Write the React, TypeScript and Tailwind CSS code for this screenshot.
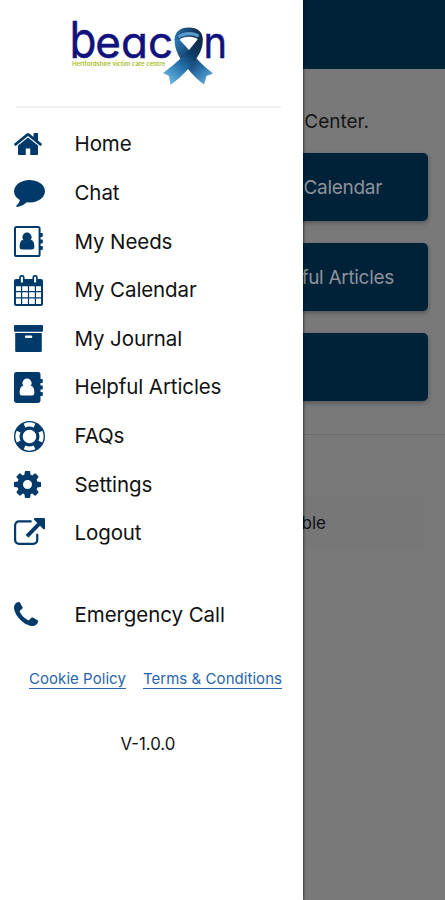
import type { ReactNode } from "react";

const NAVY = "#003a6b";

function Glyph({ box, w, h, d }: { box: string; w: number; h: number; d: string }) {
  return (
    <svg width={w} height={h} viewBox={box} preserveAspectRatio="none" fill={NAVY}>
      <path d={d} />
    </svg>
  );
}

const Home = () => (
  <Glyph box="89 253 1614 1343" w={28} h={23} d="M1472 992v480q0 26-19 45t-45 19h-384v-384h-256v384h-384q-26 0-45-19t-19-45v-480q0-1 .5-3t.5-3l575-474 575 474q1 2 1 6zm223-69l-62 74q-8 9-21 11h-3q-13 0-21-7l-692-577-692 577q-12 8-24 7-13-2-21-11l-62-74q-8-10-7-23.5t11-21.5l719-599q32-26 76-26t76 26l244 204v-195q0-14 9-23t23-9h192q14 0 23 9t9 23v408l219 182q10 8 11 21.5t-7 23.5z" />
);

const Comment = () => (
  <Glyph box="0 256 1792 1537" w={31} h={27} d="M1792 896q0 174-120 321.5t-326 233-450 85.5q-70 0-145-8-198 175-460 242-49 14-114 22-17 2-30.5-9t-17.5-29v-1q-3-4-.5-12t2-10 4.5-9.5l6-9 7-8.5 8-9q7-8 31-34.5t34.5-38 31-39.5 32.5-51 27-59 26-76q-157-89-247.5-220t-90.5-281q0-130 71-248.5t191-204.5 286-136.5 348-50.5q244 0 450 85.5t326 233 120 321.5z" />
);

const Person = ({ fill }: { fill: string }) => (
  <g fill={fill}>
    <ellipse cx="13" cy="11.2" rx="4.6" ry="4.7" />
    <path d="M9 13.8Q5.6 14.6 5.6 21Q5.7 23.6 8 23.6H18Q20.3 23.6 20.4 21Q20.4 14.6 17 13.8Q13 17.2 9 13.8Z" />
  </g>
);

const Tabs = () => (
  <path fill={NAVY} d="M26 7h2q.8 0 .8.8v2.4q0 .8-.8.8H26zM26 13.5h2q.8 0 .8.8v2.4q0 .8-.8.8H26zM26 20h2q.8 0 .8.8v2.4q0 .8-.8.8H26z" />
);

const BookOutline = () => (
  <svg width="29" height="31" viewBox="0 0 29 31">
    <rect x="1" y="1" width="24.6" height="29" rx="1.6" fill="none" stroke={NAVY} strokeWidth="2" />
    <Tabs />
    <Person fill={NAVY} />
  </svg>
);

const BookSolid = () => (
  <svg width="29" height="31" viewBox="0 0 29 31">
    <rect width="26.5" height="31" rx="2.4" fill={NAVY} />
    <Tabs />
    <Person fill="#fff" />
  </svg>
);

const Calendar = () => (
  <svg width="29" height="31" viewBox="0 0 29 31">
    <path
      fill={NAVY}
      fillRule="evenodd"
      d="M2 4H27Q29 4 29 6V29Q29 31 27 31H2Q0 31 0 29V6Q0 4 2 4ZM2 11.2V16H7V11.2ZM8.2 11.2V16H13.9V11.2ZM15.1 11.2V16H20.8V11.2ZM22 11.2V16H27V11.2ZM2 17.2V22.3H7V17.2ZM8.2 17.2V22.3H13.9V17.2ZM15.1 17.2V22.3H20.8V17.2ZM22 17.2V22.3H27V17.2ZM2 23.5V29H7V23.5ZM8.2 23.5V29H13.9V23.5ZM15.1 23.5V29H20.8V23.5ZM22 23.5V29H27V23.5Z"
    />
    <rect x="5.2" y="0" width="5.4" height="9" rx="2.4" fill={NAVY} />
    <rect x="18.4" y="0" width="5.4" height="9" rx="2.4" fill={NAVY} />
    <rect x="6.9" y="1.8" width="2" height="5.8" rx=".6" fill="#fff" />
    <rect x="20.1" y="1.8" width="2" height="5.8" rx=".6" fill="#fff" />
  </svg>
);

const Archive = () => (
  <svg width="29" height="27" viewBox="0 0 29 27" fill={NAVY}>
    <rect width="29" height="6.8" rx="1" />
    <path fillRule="evenodd" d="M1.2 8H27.8V25.8Q27.8 27 26.6 27H2.4Q1.2 27 1.2 25.8ZM12.2 10.4a1.2 1.2 0 0 0 0 2.6h4.8a1.2 1.2 0 0 0 0-2.6z" />
  </svg>
);

const LifeRing = () => (
  <svg width="31" height="31" viewBox="0 0 31 31" fill="none">
    <circle cx="15.5" cy="15.5" r="11.15" stroke={NAVY} strokeWidth="8.7" />
    <g stroke="#fff" strokeWidth="4.2">
      <path d="M10.5 4.6A12 12 0 0 1 20.5 4.6" />
      <path d="M26.4 10.5A12 12 0 0 1 26.4 20.5" />
      <path d="M20.5 26.4A12 12 0 0 1 10.5 26.4" />
      <path d="M4.6 20.5A12 12 0 0 1 4.6 10.5" />
    </g>
  </svg>
);

const Cog = () => (
  <Glyph box="128 128 1536 1536" w={27} h={27} d="M1152 896q0-106-75-181t-181-75-181 75-75 181 75 181 181 75 181-75 75-181zm512-109v222q0 12-8 23t-20 13l-185 28q-19 54-39 91 35 50 107 138 10 12 10 25t-9 23q-27 37-99 108t-94 71q-12 0-26-9l-138-108q-44 23-91 38-16 136-29 186-7 28-36 28h-222q-14 0-24.5-8.5t-11.5-21.5l-28-184q-49-16-90-37l-141 107q-10 9-25 9-14 0-25-11-126-114-165-168-7-10-7-23 0-12 8-23 15-21 51-66.5t54-70.5q-27-50-41-99l-183-27q-13-2-21-12.5t-8-23.5v-222q0-12 8-23t19-13l186-28q14-46 39-92-40-57-107-138-10-12-10-24 0-10 9-23 26-36 98.5-107.5t94.5-71.5q13 0 26 10l138 107q44-23 91-38 16-136 29-186 7-28 36-28h222q14 0 24.5 8.5t11.5 21.5l28 184q49 16 90 37l142-107q9-9 24-9 13 0 25 10 129 119 165 170 7 8 7 22 0 12-8 23-15 21-51 66.5t-54 70.5q26 50 41 98l183 28q13 2 21 12.5t8 23.5z" />
);

const External = () => (
  <Glyph box="0 0 1792 1536" w={31} h={27} d="M1408 928v320q0 119-84.5 203.5t-203.5 84.5h-832q-119 0-203.5-84.5t-84.5-203.5v-832q0-119 84.5-203.5t203.5-84.5h704q14 0 23 9t9 23v64q0 14-9 23t-23 9h-704q-66 0-113 47t-47 113v832q0 66 47 113t113 47h832q66 0 113-47t47-113v-320q0-14 9-23t23-9h64q14 0 23 9t9 23zm384-864v512q0 26-19 45t-45 19-45-19l-176-176-652 652q-10 10-23 10t-23-10l-114-114q-10-10-10-23t10-23l652-652-176-176q-19-19-19-45t19-45 45-19h512q26 0 45 19t19 45z" />
);

const Phone = () => (
  <Glyph box="192 128 1408 1408" w={24} h={24} d="M1600 1240q0 27-10 70.5t-21 68.5q-21 50-122 106-94 51-186 51-27 0-53-3.5t-57.5-12.5-47-14.5-55.5-20.5-49-18q-98-35-175-83-127-79-264-216t-216-264q-48-77-83-175-3-9-18-49t-20.5-55.5-14.5-47-12.5-57.5-3.5-53q0-92 51-186 56-101 106-122 25-11 68.5-21t70.5-10q14 0 21 3 18 6 53 76 11 19 30 54t35 63.5 31 53.5q3 4 17.5 25t21.5 35.5 7 28.5q0 20-28.5 50t-62 55-62 53-28.5 46q0 9 5 22.5t8.5 20.5 14 24 11.5 19q76 137 174 235t235 174q2 1 19 11.5t24 14 20.5 8.5 22.5 5q18 0 46-28.5t53-62 55-62 50-28.5q14 0 28.5 7t35.5 21.5 25 17.5q25 15 53.5 31t63.5 35 54 30q70 35 76 53 3 7 3 21z" />
);

function Logo() {
  return (
    <svg width="160" height="74" viewBox="70 14 160 74" className="ml-[70px] block shrink-0 overflow-visible">
      <defs>
        <linearGradient id="strand" gradientUnits="userSpaceOnUse" x1="200" y1="42" x2="167" y2="80">
          <stop offset="0" stopColor="#0f2b4a" />
          <stop offset=".3" stopColor="#0f3c68" />
          <stop offset=".6" stopColor="#2370ab" />
          <stop offset="1" stopColor="#69b5e3" />
        </linearGradient>
        <linearGradient id="tail" gradientUnits="userSpaceOnUse" x1="176" y1="42" x2="209" y2="80">
          <stop offset="0" stopColor="#2a75ae" />
          <stop offset=".45" stopColor="#103a63" />
          <stop offset=".75" stopColor="#2f76ac" />
          <stop offset="1" stopColor="#5ba3d6" />
        </linearGradient>
        <linearGradient id="loop" gradientUnits="userSpaceOnUse" x1="174" y1="36" x2="203" y2="36">
          <stop offset="0" stopColor="#2b75ad" />
          <stop offset=".4" stopColor="#1c4f7e" />
          <stop offset="1" stopColor="#10253d" />
        </linearGradient>
      </defs>
      <g fill="#12127c" stroke="#12127c" strokeWidth=".5" className="font-['Inter','Liberation_Sans',sans-serif] [font-feature-settings:'cv11']">
        <text x="69.5" y="58" fontSize="51" textLength="27" lengthAdjust="spacingAndGlyphs">b</text>
        <text y="58" fontSize="44" x="95.3 121 148">eac</text>
        <text x="203.5" y="58" fontSize="44" textLength="23.5" lengthAdjust="spacingAndGlyphs">n</text>
      </g>
      <text x="72" y="66.2" fontSize="5.5" fontWeight="600" fill="#a9bd25" textLength="93" lengthAdjust="spacingAndGlyphs" className="font-['Inter','Liberation_Sans',sans-serif]">
        Hertfordshire victim care centre
      </text>
      <path fill="url(#tail)" d="M174.6 39C174.5 49 178 57 188 69C192 74 198 80 204 84.5L206.5 76L213 73.5C206 68 198 61 189 50L179 39Z" />
      <path fill="url(#strand)" d="M202.8 39C203 50 198 58 188 69C183 75 177 80 170.5 85L169 76L163 73C171 67 180 60 189 50L198 39Z" />
      <path fill="url(#loop)" d="M174.6 40C174.5 32 180 27.5 189 27.5C197.5 27.5 203 32 202.8 40L198 39.5C195 35.8 183 35.6 179.3 40Z" />
      <path fill="#5b9bcb" d="M178 35.5C183 31 194 30.7 199.5 35L198 37.4C193 34.4 184 34.4 179 38Z" />
    </svg>
  );
}

function Row({ icon, label }: { icon: ReactNode; label: string }) {
  return (
    <div className="flex h-[48.6px] items-center pl-[14px]">
      <div className="w-[60.5px] shrink-0">{icon}</div>
      <span className="text-[20.5px] leading-6 tracking-[-0.1px] whitespace-nowrap">{label}</span>
    </div>
  );
}

export default function App() {
  return (
    <div className="relative h-[900px] w-[445px] overflow-hidden bg-[#797979] font-['Inter','Liberation_Sans',sans-serif] text-[#111]">
      <div className="flex flex-col">
        <div className="h-[69px] bg-[#002238]" />
        <div className="mt-[40px] flex h-[27px] items-center justify-end pr-[76px] text-[19px] text-[#161616]">Center.</div>
        <div className="mt-[17px] mr-[17px] ml-[17px] flex flex-col gap-[22px] text-[19px] text-[#8d929b]">
          <div className="flex h-[68px] items-center justify-end rounded-[5px] bg-[#002238] pt-[3px] pr-[46px] tracking-[-0.3px] shadow-[0_2px_5px_rgba(0,0,0,0.3)]">My Calendar</div>
          <div className="flex h-[68px] items-center justify-end rounded-[5px] bg-[#002238] pt-[3px] pr-[34px] tracking-[-0.3px] shadow-[0_2px_5px_rgba(0,0,0,0.3)]">Helpful Articles</div>
          <div className="h-[68px] rounded-[5px] bg-[#002238] shadow-[0_2px_5px_rgba(0,0,0,0.3)]" />
        </div>
        <div className="mt-[33px] h-px bg-[#6c6c6c]" />
        <div className="mt-[62px] mr-[21px] ml-[21px] flex h-[52px] items-center justify-end bg-[#777777] pt-[2px] pr-[98px] text-[17px] text-[#111]">Not available</div>
      </div>

      <div className="absolute top-0 left-0 flex h-[900px] w-[303px] flex-col bg-white pt-[14px] shadow-[1px_0_2px_rgba(0,0,0,0.5)]">
        <Logo />
        <div className="mt-[18px] mr-[22px] ml-[16px] h-[2px] shrink-0 bg-[#f0f0f0]" />
        <nav className="mt-[12.2px]">
          <Row icon={<Home />} label="Home" />
          <Row icon={<Comment />} label="Chat" />
          <Row icon={<BookOutline />} label="My Needs" />
          <Row icon={<Calendar />} label="My Calendar" />
          <Row icon={<Archive />} label="My Journal" />
          <Row icon={<BookSolid />} label="Helpful Articles" />
          <Row icon={<LifeRing />} label="FAQs" />
          <Row icon={<Cog />} label="Settings" />
          <div className="-mt-[2px] mb-[2px] flex h-[48.6px] items-center pl-[14px]">
            <div className="w-[60.5px] shrink-0"><External /></div>
            <span className="pt-[4px] text-[20.5px] leading-6 tracking-[-0.1px]">Logout</span>
          </div>
        </nav>
        <div className="mt-[31.8px]">
          <div className="flex h-[48.6px] items-center pl-[14px]">
            <div className="w-[60.5px] shrink-0"><Phone /></div>
            <span className="pt-[2px] text-[20.5px] leading-6 tracking-[-0.07px]">Emergency Call</span>
          </div>
        </div>
        <div className="mt-[31px] ml-[29px] flex gap-[17px] text-[15px] leading-[19px] tracking-[0.05px] whitespace-nowrap text-[#2865aa]">
          <a className="border-b border-[#2865aa]">Cookie Policy</a>
          <a className="border-b border-[#2865aa]">Terms &amp; Conditions</a>
        </div>
        <div className="mt-[43px] pl-[120.5px] text-[16.8px] leading-[24px]">V-1.0.0</div>
      </div>
    </div>
  );
}
